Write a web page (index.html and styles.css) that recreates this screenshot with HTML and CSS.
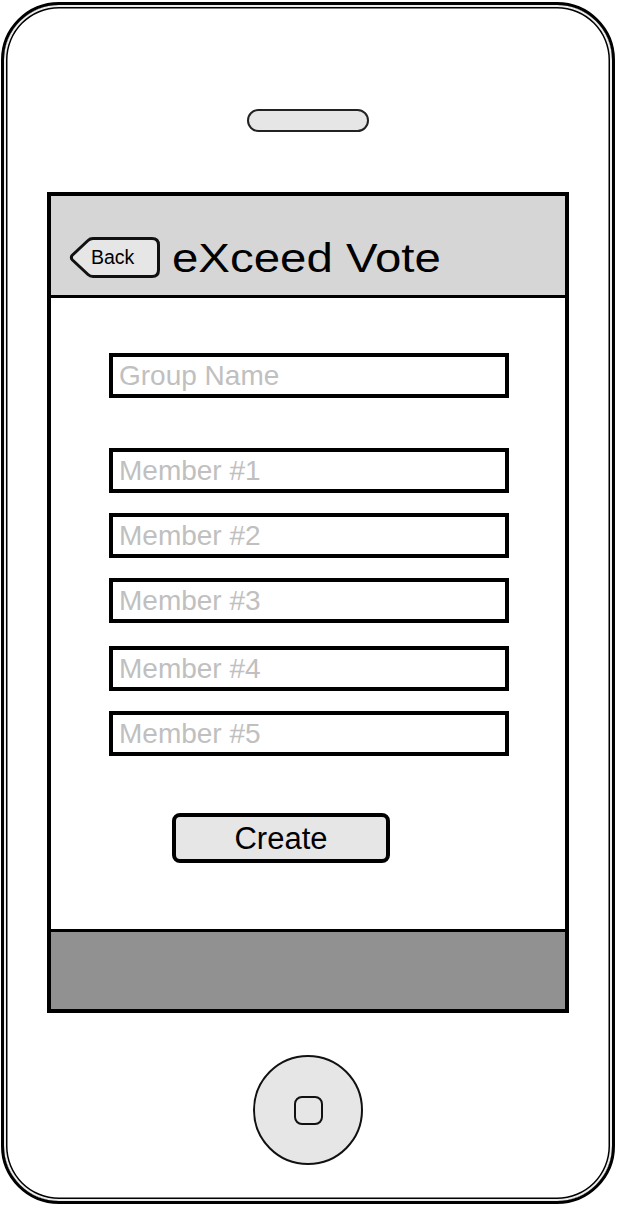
FILE: index.html
```html
<!DOCTYPE html>
<html>
<head>
<meta charset="utf-8">
<title>eXceed Vote</title>
<link rel="stylesheet" href="styles.css">
</head>
<body>
<div class="phone">
  <div class="speaker"></div>
  <div class="screen">
    <header class="topbar">
      <button class="back">
        <svg class="back-shape" width="92" height="42" viewBox="0 0 92 42">
          <path d="M2.5 20.5 Q 2 19.5 3.5 18 L 19 3.5 Q 21 1.5 24 1.5 L 83 1.5 Q 89.5 1.5 89.5 8 L 89.5 33 Q 89.5 39.5 83 39.5 L 24 39.5 Q 21 39.5 19 37.5 L 3.5 23 Q 2 21.5 2.5 20.5 Z" fill="#e6e6e6" stroke="#111" stroke-width="3" stroke-linejoin="round"/>
        </svg>
        <span class="back-label">Back</span>
      </button>
      <h1 class="title">eXceed Vote</h1>
    </header>
    <main class="content">
      <div class="field field--group">Group Name</div>
      <div class="members">
        <div class="field">Member #1</div>
        <div class="field">Member #2</div>
        <div class="field">Member #3</div>
        <div class="field field--loose">Member #4</div>
        <div class="field">Member #5</div>
      </div>
      <button class="create">Create</button>
    </main>
    <footer class="bottombar"></footer>
  </div>
  <div class="home"><div class="home-square"></div></div>
</div>
</body>
</html>
```

FILE: styles.css
```css
html, body {
  margin: 0;
  padding: 0;
  background: #fff;
}

body {
  font-family: "Liberation Sans", Arial, sans-serif;
}

.phone {
  box-sizing: border-box;
  margin: 2px 0 0 1px;
  width: 614px;
  height: 1202px;
  border: 3.5px solid #000;
  border-radius: 58px;
  box-shadow: inset 0 0 0 2px #ececec, inset 0 0 0 3.5px #000;
  display: flex;
  flex-direction: column;
  align-items: center;
}

.speaker {
  box-sizing: border-box;
  margin-top: 104px;
  width: 122px;
  height: 23px;
  border: 2px solid #222;
  border-radius: 12px;
  background: #e6e6e6;
}

.screen {
  box-sizing: border-box;
  margin-top: 60px;
  width: 522px;
  height: 821px;
  border: 4px solid #000;
  display: flex;
  flex-direction: column;
}

.topbar {
  box-sizing: border-box;
  height: 102px;
  flex: none;
  background: #d6d6d6;
  border-bottom: 3px solid #000;
  padding: 24px 0 0 18px;
  display: flex;
  align-items: center;
}

.back {
  position: relative;
  flex: none;
  width: 92px;
  height: 42px;
  padding: 0 0 0 22px;
  margin: 0;
  border: 0;
  background: transparent;
  font-family: inherit;
  text-align: left;
  cursor: pointer;
}

.back-shape {
  position: absolute;
  left: 0;
  top: 0;
}

.back-label {
  position: relative;
  font-size: 19.5px;
  color: #000;
}

.title {
  margin: 0 0 0 11px;
  font-size: 40px;
  font-weight: normal;
  line-height: 1;
  color: #000;
  transform: scaleX(1.185);
  transform-origin: left center;
  white-space: nowrap;
}

.content {
  flex: 1;
  background: #fff;
  padding-top: 55px;
  display: flex;
  flex-direction: column;
  align-items: flex-start;
  padding-left: 58px;
}

.field {
  box-sizing: border-box;
  width: 400px;
  height: 45px;
  border: 4px solid #000;
  padding-left: 6px;
  display: flex;
  align-items: center;
  font-size: 28px;
  color: #c0c0c0;
  background: #fff;
}

.members {
  margin-top: 50px;
  display: flex;
  flex-direction: column;
  gap: 20px;
}

.field--loose {
  margin-top: 3px;
}

.create {
  box-sizing: border-box;
  margin: 57px 0 0 63px;
  width: 218px;
  height: 50px;
  border: 4px solid #000;
  border-radius: 8px;
  background: #e6e6e6;
  font-family: inherit;
  font-size: 31px;
  color: #000;
  padding: 0;
  line-height: 1;
}

.bottombar {
  flex: none;
  box-sizing: border-box;
  height: 80px;
  border-top: 3px solid #000;
  background: #919191;
}

.home {
  box-sizing: border-box;
  margin-top: 42px;
  width: 110px;
  height: 110px;
  border: 2px solid #111;
  border-radius: 50%;
  background: #e6e6e6;
  display: flex;
  align-items: center;
  justify-content: center;
}

.home-square {
  box-sizing: border-box;
  width: 29px;
  height: 29px;
  border: 2px solid #111;
  border-radius: 8px;
}
```
